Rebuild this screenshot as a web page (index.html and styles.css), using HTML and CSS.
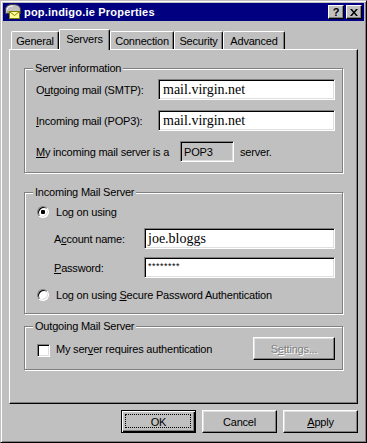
FILE: index.html
```html
<!DOCTYPE html>
<html>
<head>
<meta charset="utf-8">
<title>pop.indigo.ie Properties</title>
<link rel="stylesheet" href="styles.css">
</head>
<body>
<div class="window">
  <div class="titlebar">
    <svg class="app-icon" width="16" height="16" viewBox="0 0 16 16">
      <path d="M0.5 6 C0.5 2 3.5 0.5 8 0.5 C12.5 0.5 15.5 2 15.5 6 L15.5 9.5 L0.5 9.5 Z" fill="#c0c0c0" stroke="#404040"/>
      <path d="M2 5.5 C2.5 3 4.5 2 8 2" stroke="#ffffff" fill="none"/>
      <path d="M2 8 L14 8" stroke="#808080"/>
      <rect x="4.5" y="7.5" width="10" height="7" fill="#ffff99" stroke="#808000"/>
      <path d="M4.5 7.5 L9.5 11.5 L14.5 7.5" fill="none" stroke="#808000"/>
    </svg>
    <span class="title">pop.indigo.ie Properties</span>
    <div class="title-buttons">
      <span class="tbtn tbtn-help">?</span>
      <span class="tbtn tbtn-close">
        <svg width="8" height="7" viewBox="0 0 8 7"><path d="M0 0h2l2 2.5 2-2.5h2l-3 3.5 3 3.5h-2l-2-2.5-2 2.5h-2l3-3.5z" fill="#000"/></svg>
      </span>
    </div>
  </div>

  <div class="tabs">
    <span class="tab tab-general">General</span>
    <span class="tab tab-servers active">Servers</span>
    <span class="tab tab-connection">Connection</span>
    <span class="tab tab-security">Security</span>
    <span class="tab tab-advanced">Advanced</span>
  </div>

  <div class="panel">
    <div class="group group-info">
      <span class="group-label">Server information</span>
      <div class="field-grid">
        <span class="label">O<u>u</u>tgoing mail (SMTP):</span>
        <div class="input">mail.virgin.net</div>
        <span class="label"><u>I</u>ncoming mail (POP3):</span>
        <div class="input">mail.virgin.net</div>
      </div>
      <div class="server-type">
        <span class="server-type-label"><u>M</u>y incoming mail server is a</span>
        <span class="readonly">POP3</span>
        <span class="server-suffix">server.</span>
      </div>
    </div>

    <div class="group group-incoming">
      <span class="group-label">Incoming Mail Server</span>
      <div class="option-row">
        <span class="radio checked"></span>
        <span>Lo<u>g</u> on using</span>
      </div>
      <div class="account-row">
        <span class="account-label">A<u>c</u>count name:</span>
        <div class="input input-wide">joe.bloggs</div>
      </div>
      <div class="account-row">
        <span class="account-label"><u>P</u>assword:</span>
        <div class="input input-wide input-password">********</div>
      </div>
      <div class="option-row option-spa">
        <span class="radio"></span>
        <span>Log on using <u>S</u>ecure Password Authentication</span>
      </div>
    </div>

    <div class="group group-outgoing">
      <span class="group-label">Outgoing Mail Server</span>
      <div class="auth-row">
        <span class="checkbox"></span>
        <span>My ser<u>v</u>er requires authentication</span>
        <span class="button button-settings disabled">S<u>e</u>ttings...</span>
      </div>
    </div>
  </div>

  <div class="footer">
    <span class="button default">OK</span>
    <span class="button">Cancel</span>
    <span class="button"><u>A</u>pply</span>
  </div>
</div>
</body>
</html>
```

FILE: styles.css
```css
* {
  box-sizing: border-box;
  margin: 0;
  padding: 0;
}

body {
  margin: 0;
  background: #c0c0c0;
  font-family: "Liberation Sans", Arial, sans-serif;
  font-size: 11px;
  letter-spacing: -0.2px;
  color: #000;
}

u {
  text-decoration: underline;
  text-underline-offset: 1px;
}

.window {
  width: 367px;
  height: 443px;
  display: flex;
  flex-direction: column;
  background: #c0c0c0;
  border: 1px solid;
  border-color: #c0c0c0 #000 #000 #c0c0c0;
  box-shadow: inset 1px 1px #fff, inset -1px -1px #808080;
  padding: 2px;
}

/* Title bar */
.titlebar {
  height: 18px;
  flex: none;
  display: flex;
  align-items: center;
  background: #000080;
  color: #fff;
  padding: 0 2px 0 2px;
}

.app-icon {
  flex: none;
  display: block;
}

.title {
  margin-left: 3px;
  font-weight: bold;
  font-size: 11px;
  letter-spacing: 0.2px;
  flex: 1;
}

.title-buttons {
  display: flex;
  gap: 2px;
}

.tbtn {
  width: 16px;
  height: 14px;
  display: flex;
  align-items: center;
  justify-content: center;
  background: #c0c0c0;
  color: #000;
  border: 1px solid;
  border-color: #fff #000 #000 #fff;
  box-shadow: inset -1px -1px #808080;
  font-weight: bold;
  font-size: 11px;
  line-height: 1;
  letter-spacing: 0;
}

.tbtn-help {
  padding-top: 1px;
}

.tbtn svg {
  display: block;
}

/* Tabs */
.tabs {
  flex: none;
  display: flex;
  align-items: flex-end;
  height: 21px;
  margin-top: 8px;
  margin-bottom: -1px;
  padding-left: 8px;
  position: relative;
  z-index: 1;
}

.tab {
  height: 18px;
  margin-bottom: 1px;
  display: flex;
  align-items: center;
  justify-content: center;
  background: #c0c0c0;
  border-top: 1px solid #fff;
  border-left: 1px solid #fff;
  border-right: 1px solid #000;
  border-radius: 2px 2px 0 0;
  box-shadow: inset -1px 0 #808080;
  padding-top: 1px;
}

.tab.active {
  height: 21px;
  margin-bottom: 0;
  padding-top: 0;
  padding-bottom: 3px;
}

.tab-general { width: 48px; }
.tab-servers { width: 51px; }
.tab-connection { width: 64px; }
.tab-security { width: 49px; }
.tab-advanced { width: 62px; }

/* Panel */
.panel {
  flex: 1;
  margin: 0 6px;
  border: 1px solid;
  border-color: #fff #000 #000 #fff;
  box-shadow: inset -1px -1px #808080;
  padding: 18px 14px 0 14px;
  display: flex;
  flex-direction: column;
}

.group {
  position: relative;
  border: 1px solid #808080;
  box-shadow: inset 1px 1px #fff, 1px 1px #fff;
}

.group-label {
  position: absolute;
  top: -7px;
  left: 8px;
  padding: 0 2px;
  background: #c0c0c0;
  line-height: 13px;
}

.group-info {
  padding: 10px 7px 10px 11px;
}

.field-grid {
  display: grid;
  grid-template-columns: 122px 177px;
  grid-auto-rows: 21px;
  row-gap: 10px;
  align-items: center;
}

.input {
  height: 21px;
  display: flex;
  align-items: center;
  background: #fff;
  border: 1px solid;
  border-color: #808080 #fff #fff #808080;
  box-shadow: inset 1px 1px #000, inset -1px -1px #dfdfdf;
  padding-left: 4px;
  font-family: "Liberation Serif", "Times New Roman", serif;
  font-size: 14px;
  letter-spacing: 0;
}

.server-type {
  margin-top: 10px;
  height: 21px;
  display: flex;
  align-items: center;
}

.server-type-label {
  width: 144px;
}

.readonly {
  width: 54px;
  height: 21px;
  display: flex;
  align-items: center;
  padding-left: 3px;
  border: 1px solid;
  border-color: #808080 #fff #fff #808080;
  box-shadow: inset 1px 1px #000, inset -1px -1px #dfdfdf;
}

.server-suffix {
  margin-left: 6px;
}

.group-incoming {
  margin-top: 19px;
  padding: 11px 7px 10px 12px;
  display: flex;
  flex-direction: column;
}

.option-row {
  height: 16px;
  display: flex;
  align-items: center;
  gap: 7px;
}

.option-spa {
  margin-top: 9px;
}

.radio {
  position: relative;
  width: 12px;
  height: 12px;
  flex: none;
  border-radius: 50%;
  background: #fff;
  border: 1px solid;
  border-color: #808080 #fff #fff #808080;
  box-shadow: inset 1px 1px #000, inset -1px -1px #dfdfdf;
}

.radio.checked::after {
  content: "";
  position: absolute;
  left: 3px;
  top: 3px;
  width: 4px;
  height: 4px;
  border-radius: 1px;
  background: #000;
}

.account-row {
  margin-top: 8px;
  display: flex;
  align-items: center;
}

.account-label {
  margin-left: 17px;
  width: 90px;
}

.input-wide {
  width: 191px;
  padding-left: 3px;
}

.input-password {
  align-items: flex-start;
  padding-top: 3px;
  font-family: "Liberation Sans", Arial, sans-serif;
  font-size: 9px;
  letter-spacing: 0.5px;
}

.group-outgoing {
  margin-top: 12px;
  padding: 10px 7px 9px 12px;
}

.auth-row {
  height: 23px;
  display: flex;
  align-items: center;
  gap: 6px;
}

.checkbox {
  width: 13px;
  height: 13px;
  flex: none;
  background: #fff;
  border: 1px solid;
  border-color: #808080 #fff #fff #808080;
  box-shadow: inset 1px 1px #000, inset -1px -1px #dfdfdf;
  margin-top: 3px;
}

/* Buttons */
.button {
  position: relative;
  width: 75px;
  height: 23px;
  display: flex;
  align-items: center;
  justify-content: center;
  background: #c0c0c0;
  border: 1px solid;
  border-color: #fff #000 #000 #fff;
  box-shadow: inset -1px -1px #808080, inset 1px 1px #dfdfdf;
}

.button-settings {
  width: 82px;
  margin-left: auto;
}

.button.disabled {
  color: #808080;
  text-shadow: 1px 1px #fff;
}

.button.default {
  border-color: #000;
  box-shadow: inset 1px 1px #fff, inset -1px -1px #000, inset -2px -2px #808080;
}

.button.default::after {
  content: "";
  position: absolute;
  left: 3px;
  top: 3px;
  right: 4px;
  bottom: 4px;
  border: 1px dotted #000;
}

.footer {
  flex: none;
  display: flex;
  justify-content: flex-end;
  gap: 6px;
  padding: 6px 6px 7px 0;
}
```
